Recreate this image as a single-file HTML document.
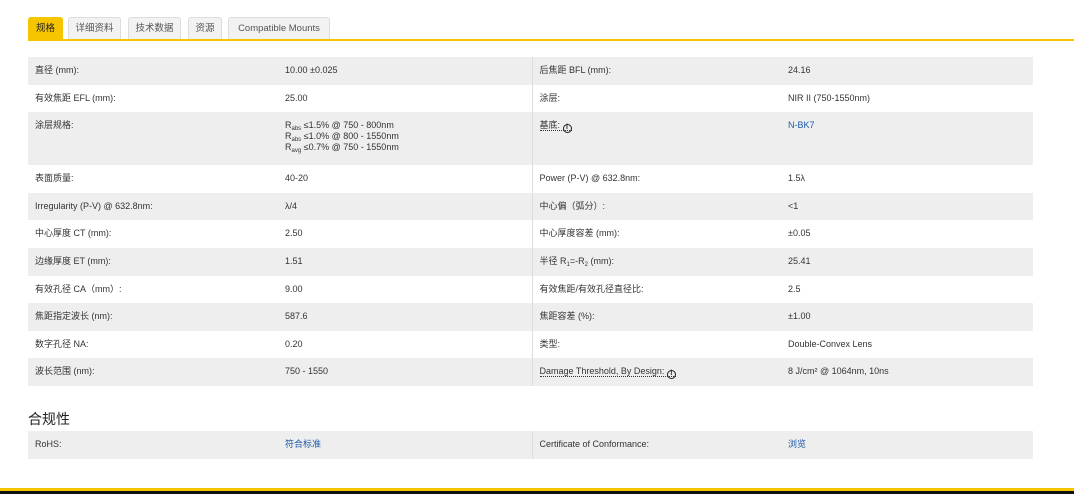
<!DOCTYPE html>
<html><head><meta charset="utf-8"><style>
*{margin:0;padding:0;box-sizing:border-box}
body{width:1074px;height:494px;background:#fff;font-family:"Liberation Sans","Noto Sans CJK SC",sans-serif;color:#333;font-size:9px;position:relative;overflow:hidden}
.tab{position:absolute;top:17px;height:23px;border:1px solid #ddd;border-bottom:none;background:#f2f2f2;border-radius:3px 3px 0 0;color:#555;font-size:9.5px;line-height:22px;text-align:center}
.tab.a{background:#f7c500;border-color:#f7c500;color:#222}
.line{position:absolute;left:28px;right:0;top:39px;height:2px;background:#f7c500}
table{position:absolute;left:28px;width:1005px;border-collapse:collapse}
td{padding:0 0 0 7px;vertical-align:top;height:27.6px;line-height:27px}
tr:nth-child(odd) td{background:#eeeeee}
td.c3{border-left:1px solid #ddd}
.w1{width:250px}.w2{width:254px}.w3{width:249px}
a{color:#1e5aa8;text-decoration:none}
sub{font-size:6px;vertical-align:-2px;line-height:0}
.dot{border-bottom:1px dotted #333}
.i{display:inline-block;width:9px;height:9px;border:1.3px solid #222;border-radius:50%;font-size:7px;line-height:6px;text-align:center;font-weight:bold;vertical-align:-1px}
h3{position:absolute;left:28px;top:409px;font-size:14px;font-weight:normal;color:#222}
.bot{position:absolute;left:0;right:0;top:488px;height:3px;background:#f7c500}
.blk{position:absolute;left:0;right:0;top:491px;height:3px;background:#111}
</style></head><body>
<div class="tab a" style="left:28px;width:35px">规格</div>
<div class="tab" style="left:68px;width:53px">详细资料</div>
<div class="tab" style="left:128px;width:53px">技术数据</div>
<div class="tab" style="left:188px;width:34px">资源</div>
<div class="tab" style="left:228px;width:102px">Compatible Mounts</div>
<div class="line"></div>
<table style="top:57px">
<tr><td class="w1">直径 (mm):</td><td class="w2">10.00 ±0.025</td><td class="c3 w3">后焦距 BFL (mm):</td><td>24.16</td></tr>
<tr><td>有效焦距 EFL (mm):</td><td>25.00</td><td class="c3">涂层:</td><td>NIR II (750-1550nm)</td></tr>
<tr><td style="height:53px">涂层规格:</td><td style="line-height:11px;padding-top:8px">R<sub>abs</sub> ≤1.5% @ 750 - 800nm<br>R<sub>abs</sub> ≤1.0% @ 800 - 1550nm<br>R<sub>avg</sub> ≤0.7% @ 750 - 1550nm</td><td class="c3"><span class="dot">基底: <span class="i">i</span></span></td><td><a>N-BK7</a></td></tr>
<tr><td>表面质量:</td><td>40-20</td><td class="c3">Power (P-V) @ 632.8nm:</td><td>1.5λ</td></tr>
<tr><td>Irregularity (P-V) @ 632.8nm:</td><td>λ/4</td><td class="c3">中心偏（弧分）:</td><td>&lt;1</td></tr>
<tr><td>中心厚度 CT (mm):</td><td>2.50</td><td class="c3">中心厚度容差 (mm):</td><td>±0.05</td></tr>
<tr><td>边缘厚度 ET (mm):</td><td>1.51</td><td class="c3">半径 R<sub>1</sub>=-R<sub>2</sub> (mm):</td><td>25.41</td></tr>
<tr><td>有效孔径 CA（mm）:</td><td>9.00</td><td class="c3">有效焦距/有效孔径直径比:</td><td>2.5</td></tr>
<tr><td>焦距指定波长 (nm):</td><td>587.6</td><td class="c3">焦距容差 (%):</td><td>±1.00</td></tr>
<tr><td>数字孔径 NA:</td><td>0.20</td><td class="c3">类型:</td><td>Double-Convex Lens</td></tr>
<tr><td>波长范围 (nm):</td><td>750 - 1550</td><td class="c3"><span class="dot">Damage Threshold, By Design: <span class="i">i</span></span></td><td>8 J/cm² @ 1064nm, 10ns</td></tr>
</table>
<h3>合规性</h3>
<table style="top:431px">
<tr><td class="w1" style="height:27px;line-height:27px">RoHS:</td><td class="w2" style="line-height:27px"><a>符合标准</a></td><td class="c3 w3" style="line-height:27px">Certificate of Conformance:</td><td style="line-height:27px"><a>浏览</a></td></tr>
</table>
<div class="bot"></div><div class="blk"></div>
</body></html>
